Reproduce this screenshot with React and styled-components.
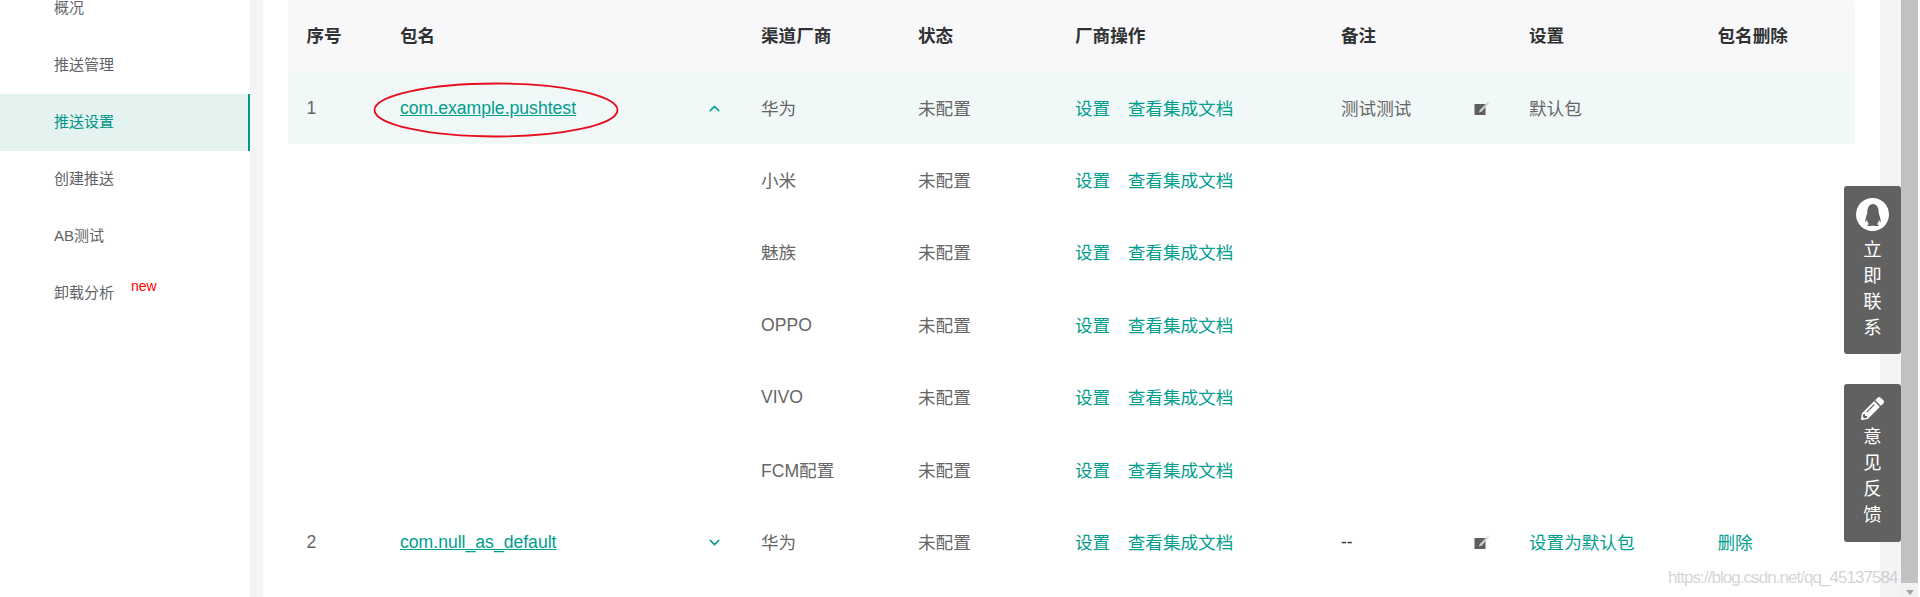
import React from "react";
import styled, { createGlobalStyle } from "styled-components";
import { FaPencilAlt, FaQq } from "react-icons/fa";
import { FiChevronUp, FiChevronDown } from "react-icons/fi";

const Global = createGlobalStyle`
  html, body { margin: 0; padding: 0; height: 597px; overflow: hidden; background: #fff; }
  body { font-family: "Liberation Sans", "Noto Sans CJK SC", sans-serif; }
  #root { height: 597px; }
`;

const COLS = "93.5px 361px 157px 157px 266px 188px 188.5px 1fr";

const Page = styled.div`
  position: relative;
  display: flex;
  width: 1920px;
  height: 597px;
  overflow: hidden;
`;
const Sidebar = styled.nav`
  flex: 0 0 250px;
  display: flex;
  flex-direction: column;
  margin-top: -20.5px;
  background: #fff;
`;
const MenuItem = styled.div`
  position: relative;
  flex: 0 0 57px;
  box-sizing: border-box;
  display: flex;
  align-items: center;
  padding: 0 0 3px 54px;
  font-size: 15px;
  color: ${(p) => (p.$active ? "#009688" : "#5f6368")};
  background: ${(p) => (p.$active ? "#e4f2f0" : "transparent")};
  border-right: ${(p) => (p.$active ? "2px solid #009688" : "0")};
`;
const NewTag = styled.span`
  position: absolute;
  left: 131px;
  top: 13px;
  font-size: 14px;
  line-height: 16px;
  color: #f00;
`;
const Gutter = styled.div`
  flex: 0 0 ${(p) => p.$w}px;
  background: #f3f4f6;
`;
const Main = styled.main`
  flex: 1;
  padding: 0 25px;
`;
const HeadRow = styled.div`
  box-sizing: border-box;
  display: grid;
  grid-template-columns: ${COLS};
  align-items: center;
  height: 72px;
  padding: 0 0 4px 18.5px;
  background: #f8f8fa;
  border-radius: 4px 4px 0 0;
  font-size: 17.6px;
  font-weight: 700;
  color: #303133;
`;
const Row = styled.div`
  display: grid;
  grid-template-columns: ${COLS};
  align-items: center;
  height: 72.4px;
  padding-left: 18.5px;
  background: ${(p) => (p.$active ? "#f0f9f8" : "transparent")};
  font-size: 17.6px;
  color: #666;
`;
const Cjk = styled.div`
  padding-bottom: ${(p) => (p.$latin ? 0 : 2)}px;
  color: ${(p) => (p.$link ? "#009e8e" : "inherit")};
`;
const PkgCell = styled.div`
  display: flex;
  align-items: center;
  justify-content: space-between;
  padding-right: 38px;
`;
const PkgLink = styled.a`
  color: #009e8e;
  text-decoration: underline;
`;
const Chevron = styled.span`
  display: flex;
  color: #009e8e;
  font-size: 17px;
`;
const Ops = styled.div`
  display: flex;
  gap: 17.5px;
  padding-bottom: 2px;
  color: #009e8e;
`;
const NoteCell = styled.div`
  display: flex;
  align-items: center;
  justify-content: space-between;
  padding-right: 40px;
`;
const Dash = styled.span`
  color: #333;
`;
const Scrollbar = styled.div`
  flex: 0 0 17px;
  display: flex;
  flex-direction: column;
  margin-right: 2px;
  background: #f1f1f1;
`;
const Thumb = styled.div`
  flex: 1;
  background: #c1c1c1;
`;
const ArrowBox = styled.div`
  flex: 0 0 14px;
  display: flex;
  align-items: center;
  justify-content: center;
  padding-top: 4px;
  box-sizing: border-box;
`;
const Arrow = styled.div`
  width: 0;
  height: 0;
  border-left: 4.5px solid transparent;
  border-right: 4.5px solid transparent;
  border-top: 5px solid #a3a3a3;
`;
const Floats = styled.aside`
  position: absolute;
  top: 186px;
  right: 19px;
  width: 57px;
  display: flex;
  flex-direction: column;
  gap: 30px;
`;
const FloatBtn = styled.div`
  height: ${(p) => p.$h}px;
  box-sizing: border-box;
  padding-top: ${(p) => p.$pt}px;
  display: flex;
  flex-direction: column;
  align-items: center;
  background: #616161;
  border-radius: 3px;
  color: #fff;
`;
const QQBadge = styled.div`
  width: 33px;
  height: 33px;
  border-radius: 50%;
  background: #fff;
  display: flex;
  align-items: center;
  justify-content: center;
  color: #616161;
  svg {
    width: 16px;
    height: 22px;
  }
`;
const FloatIcon = styled.div`
  display: flex;
  height: 22px;
  font-size: 23px;
`;
const FloatText = styled.div`
  margin-top: ${(p) => p.$mt}px;
  width: 19px;
  font-size: 18.4px;
  line-height: 26px;
  text-align: center;
`;
const Ellipse = styled.svg`
  position: absolute;
  left: 373px;
  top: 81px;
`;
const Watermark = styled.div`
  position: absolute;
  left: 1668px;
  top: 568px;
  font-size: 17px;
  line-height: 20px;
  letter-spacing: -0.95px;
  color: rgba(170, 170, 170, 0.5);
  white-space: nowrap;
`;

const EditIcon = () => (
  <svg width="15" height="15" viewBox="0 0 15 15">
    <rect x="0.5" y="3" width="11" height="11" fill="#5f5f5f" />
    <path d="M14.2 0.8 L6 8.8 L4.8 11.6 L7.8 10.5 L14.8 2.2 Z" fill="#cfcfcf" />
  </svg>
);

const menu = ["概况", "推送管理", "推送设置", "创建推送", "AB测试", "卸载分析"];
const heads = ["序号", "包名", "渠道厂商", "状态", "厂商操作", "备注", "设置", "包名删除"];
const channels = ["小米", "魅族", "OPPO", "VIVO", "FCM配置"];

const VendorOps = () => (
  <Ops>
    <span>设置</span>
    <span>查看集成文档</span>
  </Ops>
);

export default function App() {
  return (
    <Page>
      <Global />
      <Sidebar>
        {menu.map((m) => (
          <MenuItem key={m} $active={m === "推送设置"}>
            {m}
            {m === "卸载分析" && <NewTag>new</NewTag>}
          </MenuItem>
        ))}
      </Sidebar>
      <Gutter $w={13} />
      <Main>
        <HeadRow>
          {heads.map((h) => (
            <div key={h}>{h}</div>
          ))}
        </HeadRow>
        <Row $active>
          <div>1</div>
          <PkgCell>
            <PkgLink>com.example.pushtest</PkgLink>
            <Chevron><FiChevronUp /></Chevron>
          </PkgCell>
          <Cjk>华为</Cjk>
          <Cjk>未配置</Cjk>
          <VendorOps />
          <NoteCell>
            <Cjk>测试测试</Cjk>
            <EditIcon />
          </NoteCell>
          <Cjk>默认包</Cjk>
          <div />
        </Row>
        {channels.map((c) => (
          <Row key={c}>
            <div />
            <div />
            <Cjk $latin={c === "OPPO" || c === "VIVO"}>{c}</Cjk>
            <Cjk>未配置</Cjk>
            <VendorOps />
          </Row>
        ))}
        <Row>
          <div>2</div>
          <PkgCell>
            <PkgLink>com.null_as_default</PkgLink>
            <Chevron><FiChevronDown /></Chevron>
          </PkgCell>
          <Cjk>华为</Cjk>
          <Cjk>未配置</Cjk>
          <VendorOps />
          <NoteCell>
            <Dash>--</Dash>
            <EditIcon />
          </NoteCell>
          <Cjk $link>设置为默认包</Cjk>
          <Cjk $link>删除</Cjk>
        </Row>
      </Main>
      <Gutter $w={21} />
      <Scrollbar>
        <Thumb />
        <ArrowBox><Arrow /></ArrowBox>
      </Scrollbar>
      <Floats>
        <FloatBtn $h={168} $pt={12}>
          <QQBadge><FaQq preserveAspectRatio="none" /></QQBadge>
          <FloatText $mt={6}>立即联系</FloatText>
        </FloatBtn>
        <FloatBtn $h={158} $pt={13}>
          <FloatIcon><FaPencilAlt /></FloatIcon>
          <FloatText $mt={5}>意见反馈</FloatText>
        </FloatBtn>
      </Floats>
      <Ellipse width="246" height="58" viewBox="0 0 246 58">
        <ellipse cx="123" cy="29" rx="121.5" ry="26.5" fill="none" stroke="#e60e1e" strokeWidth="1.8" />
      </Ellipse>
      <Watermark>https://blog.csdn.net/qq_45137584</Watermark>
    </Page>
  );
}
